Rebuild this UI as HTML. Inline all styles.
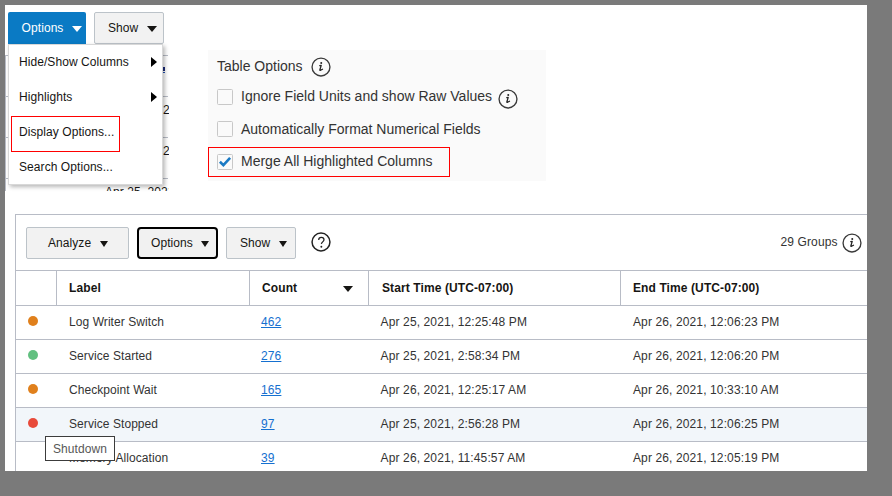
<!DOCTYPE html>
<html><head><meta charset="utf-8">
<style>
*{box-sizing:border-box;margin:0;padding:0}
html,body{width:892px;height:496px;overflow:hidden}
body{background:#7a7a7a;position:relative;font-family:"Liberation Sans",sans-serif;color:#161513}
.abs{position:absolute}
#panel{position:absolute;left:5px;top:5px;width:862px;height:466px;background:#fff;overflow:hidden}
.t12{font-size:12px;line-height:14px;white-space:nowrap;letter-spacing:0.07px}
.dt{letter-spacing:0.12px}
.t14{font-size:14px;line-height:16px;white-space:nowrap}
.tri{position:absolute;width:0;height:0;border-left:4.5px solid transparent;border-right:4.5px solid transparent;border-top:6px solid #161513}
.btn{position:absolute;background:#f2f2f2;border:1px solid #bcc3c9;border-radius:2px}
.hl{position:absolute;height:1px;background:#b8bcc6}
.vl{position:absolute;width:1px;background:#b8bcc6}
.cb{position:absolute;width:16px;height:16px;border:1px solid #c8c8c8;border-radius:1.5px;background:#fafafa}
.info{position:absolute;width:19px;height:19px;border:1.3px solid #3a3a3a;border-radius:50%}
.info span{position:absolute;left:0;right:0;top:1px;text-align:center;font-family:"Liberation Serif",serif;font-style:italic;font-size:14px;line-height:16px;color:#161513}
.dot{position:absolute;width:10px;height:10px;border-radius:50%}
.link{color:#1570d0;text-decoration:underline}
</style></head>
<body>
<div id="panel">
  <!-- background table clipped -->
  <div class="abs" style="left:0;top:0;width:164px;height:186px;overflow:hidden">
    <div class="hl" style="left:0;top:50px;width:163px"></div>
    <div class="vl" style="left:0;top:50px;height:140px"></div>
    <div class="hl" style="left:0;top:91px;width:163px"></div>
    <div class="hl" style="left:0;top:132px;width:163px"></div>
    <div class="hl" style="left:0;top:173px;width:163px"></div>
    <div class="abs" style="left:158px;top:62px;width:1.5px;height:3.5px;background:#1a2a7a"></div><div class="abs" style="left:158px;top:66.5px;width:1.5px;height:1.5px;background:#2050b0"></div>
    <div class="abs t12" style="left:158px;top:98px">2</div>
    <div class="abs t12" style="left:158px;top:139px">2</div>
    <div class="abs t12" style="left:100px;top:180px">Apr 25, 2021</div>
  </div>

  <!-- top buttons -->
  <div class="abs" style="left:3px;top:7px;width:78px;height:32px;background:#0a7ac4;border-radius:2px 2px 0 0"></div>
  <div class="abs t12" style="left:16.6px;top:16px;color:#fff">Options</div>
  <div class="tri" style="left:67px;top:21px;border-top-color:#fff;border-left-width:5px;border-right-width:5px"></div>
  <div class="btn" style="left:89px;top:7px;width:70px;height:32px"></div>
  <div class="abs t12" style="left:103px;top:16px">Show</div>
  <div class="tri" style="left:142px;top:21px;border-left-width:5px;border-right-width:5px"></div>

  <!-- menu -->
  <div class="abs" style="left:3px;top:39px;width:155px;height:141px;background:#fff;border:1px solid #d8d8d8;box-shadow:2px 2px 4px rgba(0,0,0,0.28)"></div>
  <div class="abs t12" style="left:14px;top:50px">Hide/Show Columns</div>
  <div class="abs" style="left:146px;top:52px;width:0;height:0;border-top:5px solid transparent;border-bottom:5px solid transparent;border-left:6px solid #000"></div>
  <div class="abs t12" style="left:14px;top:85px">Highlights</div>
  <div class="abs" style="left:146px;top:87px;width:0;height:0;border-top:5px solid transparent;border-bottom:5px solid transparent;border-left:6px solid #000"></div>
  <div class="abs t12" style="left:14px;top:120px">Display Options...</div>
  <div class="abs t12" style="left:14px;top:155px">Search Options...</div>
  <div class="abs" style="left:6px;top:111px;width:109px;height:36px;border:1px solid #f00"></div>

  <!-- table options panel -->
  <div class="abs" style="left:203px;top:45px;width:338px;height:131px;background:#fafafa"></div>
  <div class="abs t14" style="left:212px;top:53px;color:#333">Table Options</div>
  <svg class="abs" style="left:306.2px;top:51.7px" width="20" height="20" viewBox="0 0 20 20"><circle cx="10" cy="10" r="8.95" fill="none" stroke="#3a3a3a" stroke-width="1.35"/><circle cx="10.25" cy="5.95" r="1.0" fill="#222"/><path d="M8.8 8.7 L10.2 8.4 L8.9 12.8 Q8.7 13.6 9.5 13.3 L11.5 12.2" fill="none" stroke="#222" stroke-width="1.3" stroke-linecap="round" stroke-linejoin="round"/></svg>
  <div class="cb" style="left:212px;top:84px"></div>
  <div class="abs t14" style="left:236px;top:83px;color:#333">Ignore Field Units and show Raw Values</div>
  <svg class="abs" style="left:493px;top:84px" width="20" height="20" viewBox="0 0 20 20"><circle cx="10" cy="10" r="8.95" fill="none" stroke="#3a3a3a" stroke-width="1.35"/><circle cx="10.25" cy="5.95" r="1.0" fill="#222"/><path d="M8.8 8.7 L10.2 8.4 L8.9 12.8 Q8.7 13.6 9.5 13.3 L11.5 12.2" fill="none" stroke="#222" stroke-width="1.3" stroke-linecap="round" stroke-linejoin="round"/></svg>
  <div class="cb" style="left:212px;top:116px"></div>
  <div class="abs t14" style="left:236px;top:116px;color:#333">Automatically Format Numerical Fields</div>
  <div class="cb" style="left:212px;top:149px"></div>
  <svg class="abs" style="left:212px;top:149px" width="16" height="16" viewBox="0 0 16 16"><path d="M2.9 7.8 L6.4 11.2 L13.1 3.9" fill="none" stroke="#1a7ac4" stroke-width="2.6"/></svg>
  <div class="abs t14" style="left:236px;top:148px;color:#333">Merge All Highlighted Columns</div>
  <div class="abs" style="left:203px;top:142px;width:242px;height:30px;border:1px solid #f00"></div>

  <!-- main table -->
  <div class="abs" style="left:10px;top:209px;width:900px;height:300px;border:1px solid #b8bcc6;border-right:none"></div>
  <div class="btn" style="left:21px;top:222px;width:103px;height:32px"></div>
  <div class="abs t12" style="left:43px;top:231px">Analyze</div>
  <div class="tri" style="left:95px;top:236px"></div>
  <div class="abs" style="left:132px;top:222px;width:81px;height:32px;background:#f1f1f1;border:2px solid #000;border-radius:4px"></div>
  <div class="abs t12" style="left:146px;top:231px">Options</div>
  <div class="tri" style="left:196px;top:236px"></div>
  <div class="btn" style="left:221px;top:222px;width:70px;height:32px"></div>
  <div class="abs t12" style="left:235px;top:231px">Show</div>
  <div class="tri" style="left:274px;top:236px"></div>
  <svg class="abs" style="left:306px;top:226.5px" width="20" height="20" viewBox="0 0 20 20"><circle cx="10" cy="10" r="8.95" fill="none" stroke="#222" stroke-width="1.5"/><path d="M7.7 8.0 C7.7 6.4 8.8 5.4 10.35 5.4 C11.9 5.4 13.0 6.4 13.0 7.8 C13.0 9.6 10.5 10.1 10.35 11.9" fill="none" stroke="#222" stroke-width="1.25" stroke-linecap="butt"/><circle cx="10.35" cy="14.75" r="0.95" fill="#222"/></svg>
  <div class="abs t12 dt" style="left:775.5px;top:230px;color:#333">29 Groups</div>
  <svg class="abs" style="left:837px;top:227.8px" width="20" height="20" viewBox="0 0 20 20"><circle cx="10" cy="10" r="8.95" fill="none" stroke="#3a3a3a" stroke-width="1.35"/><circle cx="10.25" cy="5.95" r="1.0" fill="#222"/><path d="M8.8 8.7 L10.2 8.4 L8.9 12.8 Q8.7 13.6 9.5 13.3 L11.5 12.2" fill="none" stroke="#222" stroke-width="1.3" stroke-linecap="round" stroke-linejoin="round"/></svg>

  <!-- header -->
  <div class="hl" style="left:10px;top:265px;width:860px"></div>
  <div class="hl" style="left:10px;top:300px;width:860px"></div>
  <div class="vl" style="left:51px;top:265px;height:35px"></div>
  <div class="vl" style="left:244px;top:265px;height:35px"></div>
  <div class="vl" style="left:363px;top:265px;height:35px"></div>
  <div class="vl" style="left:615px;top:265px;height:35px"></div>
  <div class="abs t12" style="left:64px;top:276px;font-weight:bold;letter-spacing:0.1px">Label</div>
  <div class="abs t12" style="left:257px;top:276px;font-weight:bold;letter-spacing:0.1px">Count</div>
  <div class="abs" style="left:338px;top:281px;width:0;height:0;border-left:5px solid transparent;border-right:5px solid transparent;border-top:6px solid #161513"></div>
  <div class="abs t12" style="left:377px;top:276px;font-weight:bold;letter-spacing:0.1px">Start Time (UTC-07:00)</div>
  <div class="abs t12" style="left:628px;top:276px;font-weight:bold;letter-spacing:0.1px">End Time (UTC-07:00)</div>

  <!-- rows -->
  <div class="abs" style="left:11px;top:403px;width:860px;height:33px;background:#f2f6fa"></div>
  <div class="hl" style="left:10px;top:334px;width:860px"></div>
  <div class="hl" style="left:10px;top:368px;width:860px"></div>
  <div class="hl" style="left:10px;top:402px;width:860px"></div>
  <div class="hl" style="left:10px;top:436px;width:860px"></div>

  <div class="dot" style="left:23px;top:311px;background:#e0801c"></div>
  <div class="abs t12" style="left:64px;top:310px;color:#333">Log Writer Switch</div>
  <div class="abs t12 link dt" style="left:256px;top:310px">462</div>
  <div class="abs t12 dt" style="left:375.6px;top:310px;color:#333">Apr 25, 2021, 12:25:48 PM</div>
  <div class="abs t12 dt" style="left:628px;top:310px;color:#333">Apr 26, 2021, 12:06:23 PM</div>

  <div class="dot" style="left:23px;top:345px;background:#62c080"></div>
  <div class="abs t12" style="left:64px;top:344px;color:#333">Service Started</div>
  <div class="abs t12 link dt" style="left:256px;top:344px">276</div>
  <div class="abs t12 dt" style="left:375.6px;top:344px;color:#333">Apr 25, 2021, 2:58:34 PM</div>
  <div class="abs t12 dt" style="left:628px;top:344px;color:#333">Apr 26, 2021, 12:06:20 PM</div>

  <div class="dot" style="left:23px;top:379px;background:#e0801c"></div>
  <div class="abs t12" style="left:64px;top:378px;color:#333">Checkpoint Wait</div>
  <div class="abs t12 link dt" style="left:256px;top:378px">165</div>
  <div class="abs t12 dt" style="left:375.6px;top:378px;color:#333">Apr 26, 2021, 12:25:17 AM</div>
  <div class="abs t12 dt" style="left:628px;top:378px;color:#333">Apr 26, 2021, 10:33:10 AM</div>

  <div class="dot" style="left:23px;top:413px;background:#e84a3a"></div>
  <div class="abs t12" style="left:64px;top:412px;color:#333">Service Stopped</div>
  <div class="abs t12 link dt" style="left:256px;top:412px">97</div>
  <div class="abs t12 dt" style="left:375.6px;top:412px;color:#333">Apr 25, 2021, 2:56:28 PM</div>
  <div class="abs t12 dt" style="left:628px;top:412px;color:#333">Apr 26, 2021, 12:06:25 PM</div>

  <div class="abs t12" style="left:64px;top:446px;color:#333">Memory Allocation</div>
  <div class="abs t12 link dt" style="left:256px;top:446px">39</div>
  <div class="abs t12 dt" style="left:375.6px;top:446px;color:#333">Apr 26, 2021, 11:45:57 AM</div>
  <div class="abs t12 dt" style="left:628px;top:446px;color:#333">Apr 26, 2021, 12:05:19 PM</div>

  <!-- tooltip -->
  <div class="abs" style="left:40px;top:431px;width:70px;height:25px;background:#fff;border:1px solid #3c3c3c"></div>
  <div class="abs t12" style="left:48px;top:437px;color:#575757">Shutdown</div>
</div>
</body></html>
